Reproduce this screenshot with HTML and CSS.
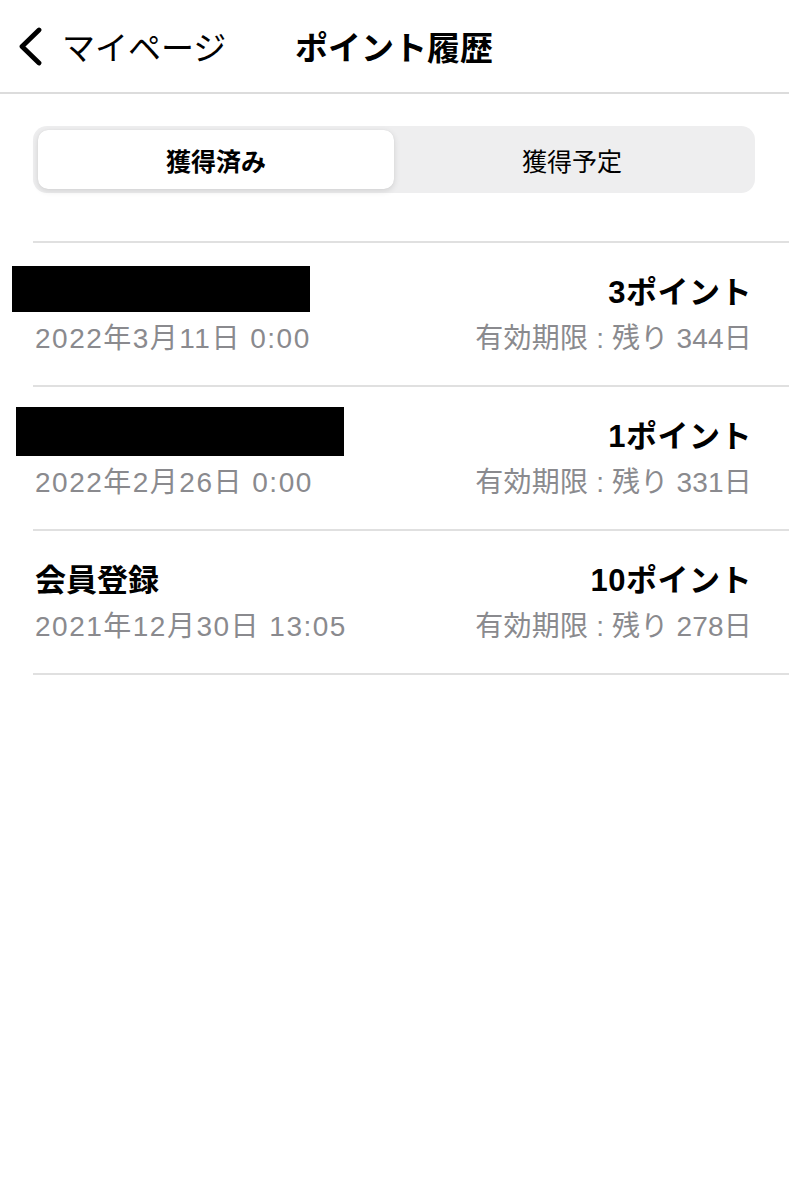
FILE: index.html
```html
<!DOCTYPE html>
<html lang="ja">
<head>
<meta charset="utf-8">
<link rel="stylesheet" href="styles.css">
</head>
<body>
<header class="nav">
  <div class="back">
    <svg class="chev" width="30" height="40" viewBox="0 0 30 40"><path d="M25 4 L8 20.5 L25 37" fill="none" stroke="#000" stroke-width="4.8" stroke-linecap="round" stroke-linejoin="round"/></svg>
    <span class="back-label">マイページ</span>
  </div>
  <h1 class="title">ポイント履歴</h1>
</header>
<main class="content">
  <div class="segment">
    <div class="seg seg-active">獲得済み</div>
    <div class="seg">獲得予定</div>
  </div>
  <ul class="list">
    <li class="row">
      <div class="line1">
        <div class="redact r1"></div>
        <span class="pts">3ポイント</span>
      </div>
      <div class="line2">
        <span class="date">2022年3月11日 0:00</span>
        <span class="exp">有効期限 : 残り 344日</span>
      </div>
    </li>
    <li class="row">
      <div class="line1">
        <div class="redact r2"></div>
        <span class="pts">1ポイント</span>
      </div>
      <div class="line2">
        <span class="date">2022年2月26日 0:00</span>
        <span class="exp">有効期限 : 残り 331日</span>
      </div>
    </li>
    <li class="row">
      <div class="line1">
        <span class="name">会員登録</span>
        <span class="pts">10ポイント</span>
      </div>
      <div class="line2">
        <span class="date">2021年12月30日 13:05</span>
        <span class="exp">有効期限 : 残り 278日</span>
      </div>
    </li>
  </ul>
</main>
</body>
</html>
```
FILE: styles.css
```css
* { box-sizing: border-box; }
html, body { margin: 0; padding: 0; background: #fff; }
body {
  font-family: "Liberation Sans", "Noto Sans CJK JP", sans-serif;
  color: #000;
  width: 789px;
  height: 1200px;
  overflow: hidden;
}
.nav {
  height: 94px;
  border-bottom: 2px solid #dcdcdc;
  display: flex;
  align-items: center;
  padding-left: 14px;
}
.back {
  display: flex;
  align-items: center;
  gap: 18px;
  width: 281px;
}
.chev { display: block; }
.back-label {
  font-family: "Noto Sans CJK JP", sans-serif;
  font-size: 33px;
  font-weight: 400;
  line-height: 1;
}
.title {
  margin: 0;
  font-family: "Noto Sans CJK JP", sans-serif;
  font-size: 33px;
  font-weight: 700;
  line-height: 1;
}
.content {
  padding: 32px 34px 0 33px;
}
.segment {
  display: flex;
  background: #eeeeef;
  border-radius: 14px;
  height: 67px;
  padding: 4px 5px;
}
.seg {
  flex: 1;
  display: flex;
  align-items: center;
  justify-content: center;
  font-family: "Noto Sans CJK JP", sans-serif;
  font-size: 25px;
  border-radius: 10px;
}
.seg-active {
  background: #fff;
  font-weight: 700;
  box-shadow: 0 2px 6px rgba(0,0,0,0.12), 0 0 1px rgba(0,0,0,0.1);
}
.list {
  list-style: none;
  margin: 48px -34px 0 0;
  padding: 0;
  border-top: 2px solid #e0e0e0;
}
.row {
  height: 144px;
  border-bottom: 2px solid #e0e0e0;
  padding: 20px 37px 0 2px;
}
.line1, .line2 {
  display: flex;
  justify-content: space-between;
  align-items: center;
}
.line1 { height: 52px; }
.line2 { height: 42px; }
.redact { background: #000; }
.r1 { width: 298px; height: 46px; margin-left: -23px; }
.r2 { width: 328px; height: 49px; margin-left: -19px; margin-top: -4px; }
.name {
  font-size: 31px;
  font-weight: 700;
}
.pts {
  font-size: 31px;
  font-weight: 700;
  letter-spacing: 0.5px;
}
.date, .exp {
  font-size: 28px;
  color: #8a8a8e;
}
.date { letter-spacing: 1.5px; }
.exp { letter-spacing: 0.2px; }
```
